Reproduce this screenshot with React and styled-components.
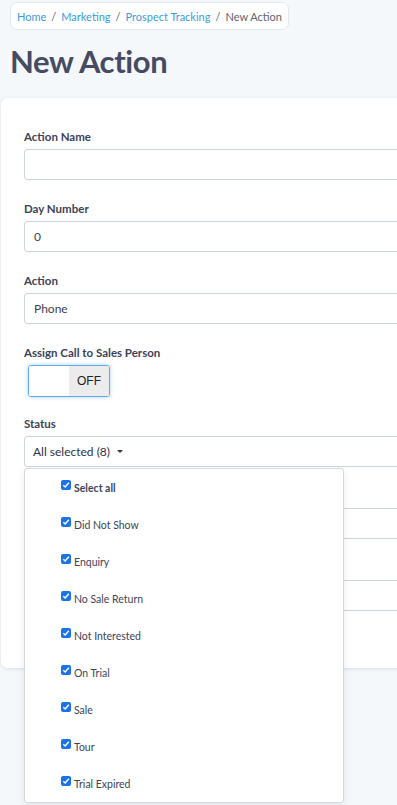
import React, { useState } from "react";
import styled, { createGlobalStyle } from "styled-components";

const GlobalStyle = createGlobalStyle`
  html {
    overflow: hidden;
  }
  body {
    margin: 0;
    padding: 0;
    min-height: 805px;
    background: #f5f8fb;
    font-family: "Lato", "Liberation Sans", sans-serif;
  }
`;

const Page = styled.div`
  width: 640px;
  padding: 2px 0 0 1px;
`;

const Breadcrumb = styled.nav`
  display: inline-flex;
  align-items: center;
  gap: 5px;
  margin-left: 9px;
  height: 28px;
  padding: 0 6px;
  background: #fff;
  border: 1px solid #e1e6ed;
  border-radius: 7px;
  box-sizing: border-box;
  font-size: 11px;

  a {
    color: #3d9be0;
    text-decoration: none;
  }

  span {
    color: #60646f;
  }
`;

const Title = styled.h1`
  margin: 11px 0 0 9px;
  font-size: 31px;
  font-weight: 700;
  line-height: 40px;
  color: #464b62;
  letter-spacing: -0.4px;
`;

const Card = styled.div`
  margin-top: 17px;
  background: #fff;
  border-radius: 7px;
  box-shadow: 0 1px 4px rgba(40, 60, 90, 0.12);
  padding: 30px 0 37px 23px;
`;

const Field = styled.div`
  position: relative;
  margin-bottom: ${(p) => (p.$tight ? "18px" : "20px")};
`;

const Label = styled.label`
  display: block;
  font-size: 11.5px;
  font-weight: 700;
  line-height: 17px;
  color: #3c4257;
  margin-bottom: 4px;
`;

const Input = styled.div`
  height: 31px;
  box-sizing: border-box;
  border: 1px solid #cdd4dd;
  border-radius: 3px;
  padding: 0 9px;
  display: flex;
  align-items: center;
  font-size: 12px;
  color: #3e4251;
  background: #fff;
`;

const Toggle = styled.div`
  display: flex;
  width: 82px;
  height: 32px;
  margin-left: 4px;
  box-sizing: border-box;
  border: 1px solid #62a9e8;
  border-radius: 3px;
  box-shadow: 0 0 4px rgba(98, 169, 232, 0.55);
  overflow: hidden;
`;

const ToggleHalf = styled.div`
  flex: 1;
  display: flex;
  align-items: center;
  justify-content: center;
  background: ${(p) => (p.$off ? "#ececec" : "#fff")};
  font-family: "Liberation Sans", Arial, sans-serif;
  font-size: 12px;
  color: #222;
`;

const SelectBox = styled(Input)`
  gap: 7px;
  color: #2f3342;
  padding-left: 8px;
`;

const Caret = styled.span`
  width: 0;
  height: 0;
  border-left: 3.5px solid transparent;
  border-right: 3.5px solid transparent;
  border-top: 3.5px solid #333;
`;

const Menu = styled.ul`
  position: absolute;
  z-index: 5;
  top: 53px;
  left: 0;
  width: 320px;
  box-sizing: border-box;
  margin: 0;
  padding: 0;
  list-style: none;
  background: #fff;
  border: 1px solid #d6d9de;
  border-radius: 3px;
  box-shadow: 0 3px 10px rgba(0, 0, 0, 0.08);
`;

const MenuItem = styled.li`
  height: 37px;
  display: flex;
  align-items: center;
  padding-left: 36px;
  font-size: 10.5px;
  font-weight: ${(p) => (p.$bold ? 700 : 400)};
  color: #3e4355;
`;

const Check = styled.span`
  display: inline-flex;
  align-items: center;
  justify-content: center;
  width: 10px;
  height: 10px;
  border-radius: 2px;
  background: #1a73e8;
  margin: -5px 3px 0 0;
`;

const statuses = [
  "Did Not Show",
  "Enquiry",
  "No Sale Return",
  "Not Interested",
  "On Trial",
  "Sale",
  "Tour",
  "Trial Expired",
];

const CheckIcon = () => (
  <Check>
    <svg width="8" height="8" viewBox="0 0 8 8">
      <path d="M1.3 4.2 L3.2 6 L6.8 1.8" fill="none" stroke="#fff" strokeWidth="1.5" />
    </svg>
  </Check>
);

const App = () => {
  const [open] = useState(true);

  return (
    <Page>
      <GlobalStyle />
      <Breadcrumb>
        <a href="#">Home</a>
        <span>/</span>
        <a href="#">Marketing</a>
        <span>/</span>
        <a href="#">Prospect Tracking</a>
        <span>/</span>
        <span>New Action</span>
      </Breadcrumb>
      <Title>New Action</Title>
      <Card>
        <Field>
          <Label>Action Name</Label>
          <Input />
        </Field>
        <Field>
          <Label>Day Number</Label>
          <Input>0</Input>
        </Field>
        <Field>
          <Label>Action</Label>
          <Input>Phone</Input>
        </Field>
        <Field $tight>
          <Label>Assign Call to Sales Person</Label>
          <Toggle>
            <ToggleHalf />
            <ToggleHalf $off>OFF</ToggleHalf>
          </Toggle>
        </Field>
        <Field>
          <Label>Status</Label>
          <SelectBox>
            All selected (8) <Caret />
          </SelectBox>
          {open && (
            <Menu>
              <MenuItem $bold>
                <CheckIcon />
                Select all
              </MenuItem>
              {statuses.map((s) => (
                <MenuItem key={s}>
                  <CheckIcon />
                  {s}
                </MenuItem>
              ))}
            </Menu>
          )}
        </Field>
        <Field>
          <Label>Call Script</Label>
          <Input />
        </Field>
        <Field>
          <Label>Notes</Label>
          <Input />
        </Field>
      </Card>
    </Page>
  );
};

export default App;
